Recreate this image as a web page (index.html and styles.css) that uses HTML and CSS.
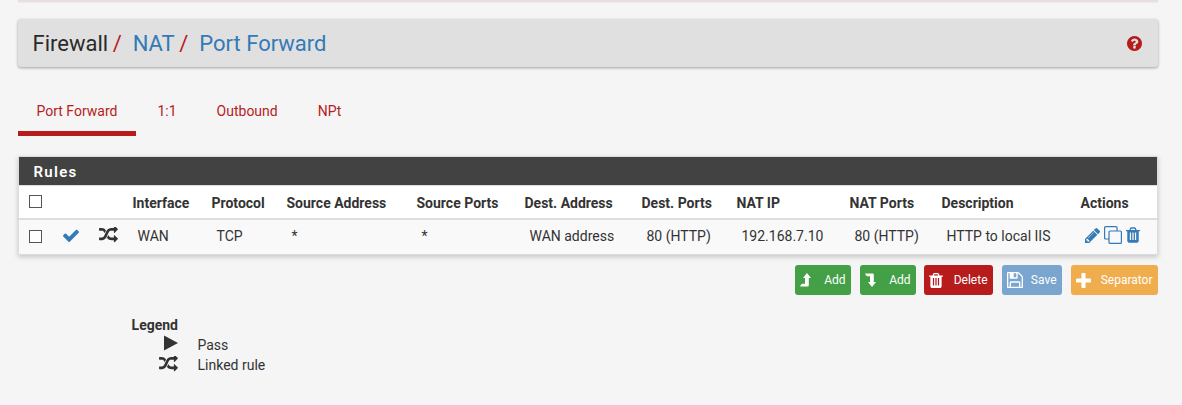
FILE: index.html
```html
<!DOCTYPE html>
<html lang="en">
<head>
<meta charset="utf-8">
<title>Firewall: NAT: Port Forward</title>
<link rel="stylesheet" href="styles.css">
</head>
<body>
<svg class="sprite" aria-hidden="true">
<symbol id="random" viewBox="0 160 1792 1472"><path d="M666 481q-60 92-137 273-22-45-37-72.5t-40.5-63.5-51-56.5-63-35-81.5-14.5h-224q-14 0-23-9t-9-23v-192q0-14 9-23t23-9h224q250 0 410 225zm1126 799q0 14-9 23l-320 320q-9 9-23 9-13 0-22.5-9.5t-9.5-22.5v-192q-32 0-85 .5t-81 1-73-1-71-5-64-10.5-63-18.5-58-28.5-59-40-55-53.5-56-69.5q59-93 136-273 22 45 37 72.5t40.5 63.5 51 56.5 63 35 81.5 14.5h256v-192q0-14 9-23t23-9q12 0 24 10l319 319q9 9 9 23zm0-896q0 14-9 23l-320 320q-9 9-23 9-13 0-22.5-9.5t-9.5-22.5v-192h-256q-48 0-87 15t-69 45-51 61.5-45 77.5q-32 62-78 171-29 66-49.5 111t-54 105-64 100-74 83-90 68.5-106.5 42-128 16.5h-224q-14 0-23-9t-9-23v-192q0-14 9-23t23-9h224q48 0 87-15t69-45 51-61.5 45-77.5q32-62 78-171 29-66 49.5-111t54-105 64-100 74-83 90-68.5 106.5-42 128-16.5h256v-192q0-14 9-23t23-9q12 0 24 10l319 319q9 9 9 23z"/></symbol>
<symbol id="trash" viewBox="192 128 1408 1536"><path d="M704 1376v-704q0-14-9-23t-23-9h-64q-14 0-23 9t-9 23v704q0 14 9 23t23 9h64q14 0 23-9t9-23zm256 0v-704q0-14-9-23t-23-9h-64q-14 0-23 9t-9 23v704q0 14 9 23t23 9h64q14 0 23-9t9-23zm256 0v-704q0-14-9-23t-23-9h-64q-14 0-23 9t-9 23v704q0 14 9 23t23 9h64q14 0 23-9t9-23zm-544-992h448l-48-117q-7-9-17-11h-317q-10 2-17 11zm928 32v64q0 14-9 23t-23 9h-96v948q0 83-47 143.5t-113 60.5h-832q-66 0-113-58.5t-47-141.5v-952h-96q-14 0-23-9t-9-23v-64q0-14 9-23t23-9h309l70-167q15-37 54-63t79-26h320q40 0 79 26t54 63l70 167h309q14 0 23 9t9 23z"/></symbol>
<symbol id="turn" viewBox="0 0 11 14"><path d="M7 0l4 5H8.8v7.3q0 1.2-1.2 1.2H.4L0 13l2-2.2h3V5H3z"/></symbol>
</svg>
<div class="navbar"></div>
<header class="title">
  <span>Firewall</span><i>/</i><a>NAT</a><i>/</i><a>Port Forward</a>
  <svg class="help" viewBox="128 128 1536 1536"><path d="M1024 1376v-192q0-14-9-23t-23-9h-192q-14 0-23 9t-9 23v192q0 14 9 23t23 9h192q14 0 23-9t9-23zm256-672q0-88-55.5-163t-138.5-116-170-41q-243 0-371 213-15 24 8 42l132 100q7 6 19 6 16 0 25-12 53-68 86-92 34-24 86-24 48 0 85.5 26t37.5 59q0 38-20 61t-68 45q-63 28-115.5 86.5t-52.5 125.5v36q0 14 9 23t23 9h192q14 0 23-9t9-23q0-19 21.5-49.5t54.5-49.5q32-18 49-28.5t46-35 44.5-48 28-60.5 12.5-81zm384 192q0 209-103 385.5t-279.5 279.5-385.5 103-385.5-103-279.5-279.5-103-385.5 103-385.5 279.5-279.5 385.5-103 385.5 103 279.5 279.5 103 385.5z"/></svg>
</header>
<nav class="tabs"><a class="active">Port Forward</a><a>1:1</a><a>Outbound</a><a>NPt</a></nav>
<section class="panel">
  <h2>Rules</h2>
  <div class="row head">
    <span class="box"></span><span></span><span></span><span>Interface</span><span>Protocol</span><span>Source Address</span><span>Source Ports</span><span>Dest. Address</span><span>Dest. Ports</span><span>NAT IP</span><span>NAT Ports</span><span>Description</span><span>Actions</span>
  </div>
  <div class="row rule">
    <span class="box"></span>
    <svg class="check" viewBox="121 270 1550 1252"><path d="M1671 566q0 40-28 68l-724 724-136 136q-28 28-68 28t-68-28l-136-136-362-362q-28-28-28-68t28-68l136-136q28-28 68-28t68 28l294 295 656-657q28-28 68-28t68 28l136 136q28 28 28 68z"/></svg>
    <svg class="random"><use href="#random"/></svg>
    <span>WAN</span><span>TCP</span><span>*</span><span>*</span><span>WAN address</span><span>80 (HTTP)</span><span>192.168.7.10</span><span>80 (HTTP)</span><span>HTTP to local IIS</span>
    <div class="actions">
      <svg class="pencil" viewBox="128 149 1515 1515"><path d="M491 1536l91-91-235-235-91 91v107h128v128h107zm523-928q0-22-22-22-10 0-17 7l-542 542q-7 7-7 17 0 22 22 22 10 0 17-7l542-542q7-7 7-17zm-54-192l416 416-832 832h-416v-416zm683 96q0 53-37 90l-166 166-416-416 166-165q36-38 90-38 53 0 91 38l235 234q37 39 37 91z"/></svg>
      <svg class="clone" viewBox="0 0 18 18"><rect x="5" y="5" width="12.4" height="12.4" rx="1"/><path d="M5 13H1.6q-1 0-1-1V1.6q0-1 1-1H12q1 0 1 1V5"/></svg>
      <svg class="trash"><use href="#trash"/></svg>
    </div>
  </div>
</section>
<div class="buttons">
  <a class="btn add"><svg class="turn"><use href="#turn"/></svg>Add</a>
  <a class="btn add last"><svg class="turn down"><use href="#turn"/></svg>Add</a>
  <a class="btn delete"><svg class="bin"><use href="#trash"/></svg>Delete</a>
  <a class="btn save"><svg class="disk" viewBox="128 128 1536 1536"><path d="M512 1536h768v-384h-768v384zm896 0h128v-896q0-14-10-38.5t-20-34.5l-281-281q-10-10-34-20t-39-10v416q0 40-28 68t-68 28h-576q-40 0-68-28t-28-68v-416h-128v1280h128v-416q0-40 28-68t68-28h832q40 0 68 28t28 68v416zm-384-928v-320q0-13-9.5-22.5t-22.5-9.5h-192q-13 0-22.5 9.5t-9.5 22.5v320q0 13 9.5 22.5t22.5 9.5h192q13 0 22.5-9.5t9.5-22.5zm640 32v928q0 40-28 68t-68 28h-1344q-40 0-68-28t-28-68v-1344q0-40 28-68t68-28h928q40 0 88 20t76 48l280 280q28 28 48 76t20 88z"/></svg>Save</a>
  <a class="btn separator"><svg class="plus" viewBox="192 128 1408 1408"><path d="M1600 736v192q0 40-28 68t-68 28h-416v416q0 40-28 68t-68 28h-192q-40 0-68-28t-28-68v-416h-416q-40 0-68-28t-28-68v-192q0-40 28-68t68-28h416v-416q0-40 28-68t68-28h192q40 0 68 28t28 68v416h416q40 0 68 28t28 68z"/></svg>Separator</a>
</div>
<dl class="legend">
  <dt class="caption">Legend</dt><dd></dd>
  <dt><svg class="play" viewBox="0 0 14 16"><path d="M0 .5v15L14 8z"/></svg></dt><dd>Pass</dd>
  <dt><svg class="random"><use href="#random"/></svg></dt><dd>Linked rule</dd>
</dl>
</body>
</html>
```
FILE: styles.css
```css
* { box-sizing: border-box; }
body { margin: 0; height: 405px; overflow: hidden; background: #f5f5f5; color: #333; font: 14px/20px Roboto, sans-serif; padding: 0 24px 0 18px; }
svg { display: block; fill: currentColor; flex: none; }
.sprite { position: absolute; width: 0; height: 0; }
.navbar { height: 1px; background: #eedcda; box-shadow: 0 1px 2px #ccc; }
.title { display: flex; align-items: center; height: 48px; margin-top: 18px; padding: 1px 16px 0 14.5px; background: #e0e0e0; border-radius: 3px; box-shadow: 0 1px 3px rgba(0,0,0,.35); font-size: 22px; color: #2a2a2a; }
.title i { font-style: normal; color: #b71c1c; margin: 0 11px 0 4.5px; }
.title a { color: #337ab7; }
.help { width: 15px; height: 15px; margin-left: auto; color: #b71c1c; }
.tabs { display: flex; height: 49px; margin-top: 20px; color: #b71c1c; }
.tabs a { padding: 14px 18.5px 0; margin-right: 3px; }
.tabs .active { border-bottom: 5px solid #b71c1c; }
.panel { margin-top: 20px; height: 99px; border: 1px solid #ddd; background: #fff; box-shadow: 0 2px 5px rgba(0,0,0,.2); }
.panel h2 { margin: 0; height: 28px; padding: 1px 14.5px 0; background: #424242; color: #fff; font-size: 15px; line-height: 28px; font-weight: 600; letter-spacing: 1.3px; }
.row { display: grid; grid-template-columns: 34px 36px 43px 79px 75px 130px 108px 117px 95px 113px 92px 139px 77px; align-items: center; }
.head { height: 35px; padding-top: 2px; border-top: 1px solid #ddd; border-bottom: 2px solid #ddd; font-weight: 700; }
.head > span:not(.box) { padding-left: .5px; }
.rule { height: 34px; background: #f9f9f9; }
.rule > span:not(.box) { padding-left: 5.5px; margin-top: -2px; white-space: nowrap; }
.box { width: 13px; height: 13px; margin-left: 10px; border: 1px solid #555; background: #fff; }
.head .box { margin-top: -3px; }
.rule .box { margin-top: -1px; }
.check { width: 16px; height: 13px; margin: -4px 0 0 10px; color: #337ab7; }
.random { width: 19px; height: 15.5px; }
.rule .random { margin: -4px 0 0 10px; }
.actions { display: flex; align-items: center; padding-left: 5px; margin-top: -4px; color: #337ab7; }
.pencil { width: 15px; height: 15px; }
.clone { width: 18px; height: 18px; margin-left: 4px; fill: none; stroke: #337ab7; stroke-width: 1.2; }
.trash { width: 14px; height: 16px; margin-left: 4px; }
.buttons { display: flex; justify-content: flex-end; margin-top: 10px; gap: 9px; }
.btn { display: flex; align-items: center; justify-content: space-between; height: 30px; border-radius: 3px; color: #fff; font-size: 12px; padding: 0 5.5px 0 5px; }
.add { width: 56px; background: #43a047; }
.last { margin-right: -1px; }
.delete { width: 69px; background: #b71c1c; }
.save { width: 60px; background: #79a5cf; }
.separator { width: 87px; background: #f0ad4e; }
.turn { width: 11px; height: 14px; }
.down { transform: scaleY(-1); }
.bin { width: 14px; height: 15px; }
.disk { width: 16px; height: 16px; }
.plus { width: 15px; height: 15px; }
.legend { display: grid; grid-template-columns: 47px auto; column-gap: 19.5px; margin: 20px 0 0 113px; grid-auto-rows: 20px; }
.legend dt { display: flex; justify-content: flex-end; }
.legend .caption { font-weight: 700; }
.legend dd { margin: 0; }
.play { width: 14px; height: 16px; }
.legend .random { margin-top: 1px; }
```
